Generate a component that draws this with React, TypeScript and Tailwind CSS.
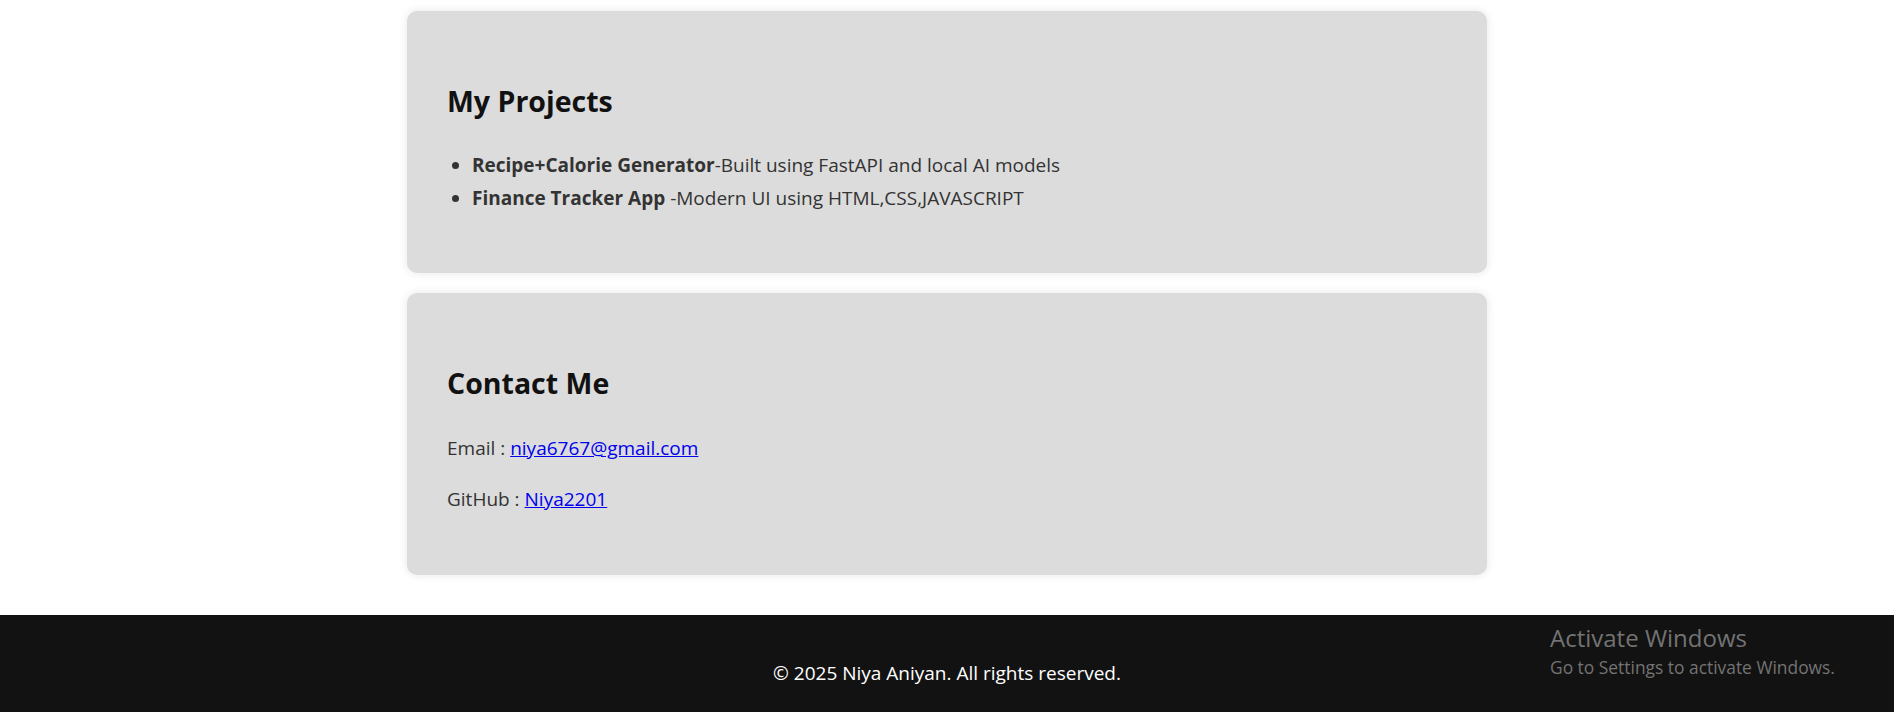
export default function App() {
  return (
    <div className="min-h-screen bg-white font-['Open_Sans',sans-serif] text-[#333]">
      <main className="flex flex-col items-center gap-5 pt-[11px] pb-[40px]">
        <section className="w-[1080px] rounded-[10px] bg-[#dcdcdc] p-10 shadow-[0_0_10px_rgba(0,0,0,0.1)]">
          <h2 className="mt-[33px] text-[28.5px] leading-[34px] font-bold text-[#111]">
            My Projects
          </h2>
          <ul className="mt-[31px] mb-[19px] list-disc pl-[25px] text-[19px] leading-[32.6px]">
            <li>
              <strong>Recipe+Calorie Generator</strong>-Built using FastAPI and
              local AI models
            </li>
            <li>
              <strong>Finance Tracker App</strong> -Modern UI using
              HTML,CSS,JAVASCRIPT
            </li>
          </ul>
        </section>
        <section className="w-[1080px] rounded-[10px] bg-[#dcdcdc] p-10 shadow-[0_0_10px_rgba(0,0,0,0.1)]">
          <h2 className="mt-[33px] text-[28.5px] leading-[34px] font-bold text-[#111]">
            Contact Me
          </h2>
          <div className="text-[19px] leading-[32.6px]">
            <p className="mt-[32px]">
              Email :{" "}
              <a href="#" className="text-[#0000ee] underline">
                niya6767@gmail.com
              </a>
            </p>
            <p className="mt-[18.4px] mb-[19.5px]">
              GitHub :{" "}
              <a href="#" className="text-[#0000ee] underline">
                Niya2201
              </a>
            </p>
          </div>
        </section>
      </main>
      <footer className="relative bg-[#121212] pt-[42px] pb-[42px] text-center text-[19px] leading-[32px] text-white">
        <p>© 2025 Niya Aniyan. All rights reserved.</p>
        <div className="absolute top-[7.7px] left-[1550px] text-left text-[#737373]">
          <div className="text-[24px] leading-[30px]">Activate Windows</div>
          <div className="text-[17.4px] leading-[29px]">
            Go to Settings to activate Windows.
          </div>
        </div>
      </footer>
    </div>
  );
}
